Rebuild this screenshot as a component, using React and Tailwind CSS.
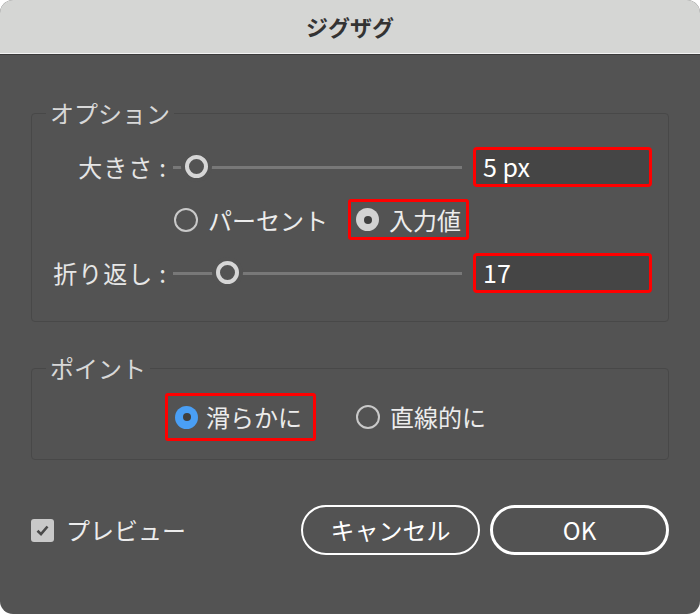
const font = {
  fontFamily: '"Noto Sans CJK JP", "Noto Sans", sans-serif',
};

const Slider = ({ value }) => {
  return (
    <div className="relative h-[26px] w-[289px]">
      <div className="absolute left-0 right-0 top-[12px] h-[3px] bg-[#787878]" />
      <div
        className="absolute top-[1px] h-[23px] w-[23px] rounded-full border-[4px] border-[#d6d6d6] bg-[#535353] shadow-[0_0_0_4px_#535353]"
        style={{ left: value }}
      />
    </div>
  );
};

const Radio = ({ checked, blue }) => {
  if (checked) {
    return (
      <span
        className={`flex h-[23px] w-[23px] shrink-0 items-center justify-center rounded-full ${
          blue ? "bg-[#4a9ff5]" : "bg-[#d2d2d2]"
        }`}
      >
        <span className="block h-[8px] w-[8px] rounded-full bg-[#3f3f3f]" />
      </span>
    );
  }
  return <span className="block h-[24px] w-[24px] shrink-0 rounded-full border-[2px] border-[#c9c9c9]" />;
};

const NumberBox = ({ value }) => (
  <div className="flex h-[40px] w-[179px] items-center rounded-[4px] border-[3px] border-[#ff0000] bg-[#454545] pl-[7px] text-[25px] text-white">
    {value}
  </div>
);

const Label = ({ children }) => (
  <div className="flex w-[123px] shrink-0 items-center justify-end pr-[7px] text-[24px] text-[#e6e6e6]">
    <span className="tracking-[1px]">{children}</span>
    <span className="ml-[6px]">:</span>
  </div>
);

export default function App() {
  return (
    <div className="h-[614px] w-[700px] bg-white" style={font}>
      <div className="flex h-[614px] w-[700px] flex-col overflow-hidden rounded-[13px] bg-[#535353]">
        {/* title bar */}
        <div className="flex h-[53px] shrink-0 items-center justify-center bg-[#d5d6d4] text-[22px] font-bold text-[#333333]">
          ジグザグ
        </div>
        <div className="h-[1px] bg-[#f3f3f3]" />
        <div className="h-[1px] bg-[#3a3a3a]" />

        <div className="flex flex-1 flex-col px-[31px]">
          {/* options */}
          <fieldset className="mt-[45px] rounded-[4px] border border-[#484848] pb-[28px]">
            <legend className="ml-[14px] px-[4px] text-[24px] leading-[26px] text-[#d8d8d8]">
              オプション
            </legend>
            <div className="mt-[21px] flex h-[40px] items-center pl-[18px]">
              <Label>大きさ</Label>
              <Slider value={12} />
              <div className="ml-[11px]">
                <NumberBox value="5 px" />
              </div>
            </div>
            <div className="mt-[12px] flex h-[41px] items-center pl-[142px]">
              <Radio />
              <span className="ml-[10px] text-[24px] text-[#ececec]">パーセント</span>
              <div className="ml-[20px] flex h-[41px] w-[121px] items-center rounded-[3px] border-[3px] border-[#ff0000] pl-[5px]">
                <Radio checked />
                <span className="ml-[10px] text-[24px] text-[#ececec]">入力値</span>
              </div>
            </div>
            <div className="mt-[13px] flex h-[40px] items-center pl-[18px]">
              <Label>折り返し</Label>
              <Slider value={43} />
              <div className="ml-[11px]">
                <NumberBox value="17" />
              </div>
            </div>
          </fieldset>

          {/* points */}
          <fieldset className="mt-[33px] rounded-[4px] border border-[#484848] pb-[18px]">
            <legend className="ml-[14px] px-[4px] text-[24px] leading-[26px] text-[#d8d8d8]">
              ポイント
            </legend>
            <div className="mt-[12px] flex items-center pl-[133px]">
              <div className="flex h-[48px] w-[151px] items-center rounded-[3px] border-[3px] border-[#ff0000] pl-[7px]">
                <Radio checked blue />
                <span className="ml-[8px] text-[24px] text-[#ececec]">滑らかに</span>
              </div>
              <span className="ml-[40px]">
                <Radio />
              </span>
              <span className="ml-[10px] text-[24px] text-[#ececec]">直線的に</span>
            </div>
          </fieldset>

          {/* footer */}
          <div className="mt-[45px] flex items-center">
            <span className="flex h-[23px] w-[23px] items-center justify-center rounded-[3px] bg-[#c9c9c9]">
              <svg width="15" height="15" viewBox="0 0 15 15">
                <path d="M2.5 7.8 L6 11.2 L12.5 3.5" fill="none" stroke="#4a4a4a" strokeWidth="2.6" />
              </svg>
            </span>
            <span className="ml-[12px] text-[24px] text-[#ececec]">プレビュー</span>
            <button className="ml-auto flex h-[50px] w-[179px] items-center justify-center rounded-full border-[2px] border-white text-[24px] text-white">
              キャンセル
            </button>
            <button className="ml-[10px] flex h-[50px] w-[179px] items-center justify-center rounded-full border-[3px] border-white text-[24px] text-white">
              OK
            </button>
          </div>
        </div>
      </div>
    </div>
  );
}
